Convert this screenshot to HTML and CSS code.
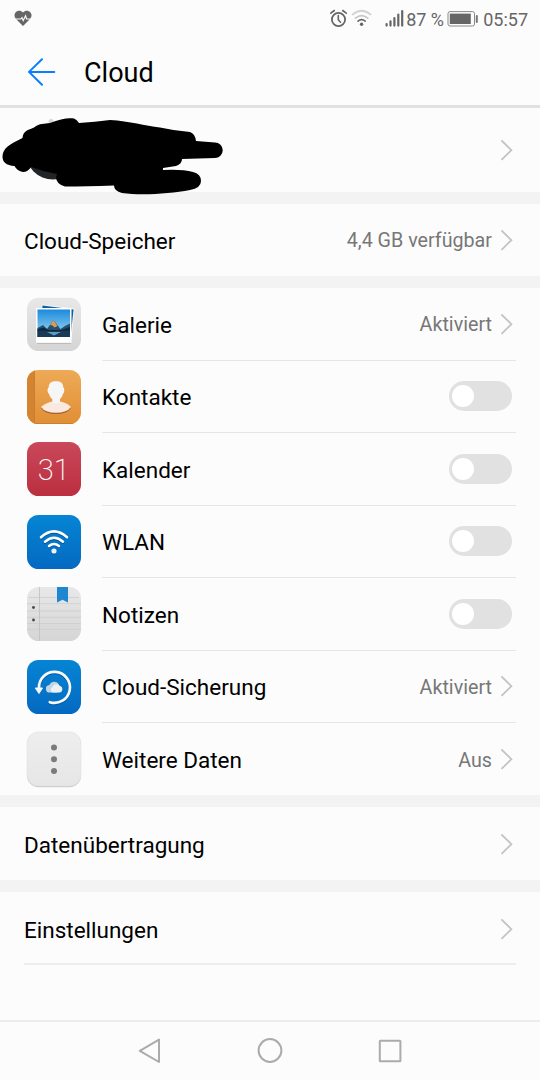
FILE: index.html
```html
<!DOCTYPE html>
<html lang="de">
<head>
  <meta charset="UTF-8" />
  <meta name="viewport" content="width=device-width, initial-scale=1.0" />
  <title>Cloud</title>
  <link rel="stylesheet" href="styles.css">
</head>
<body>
  <!-- shared shapes -->
  <svg class="defs" width="0" height="0">
    <defs>
      <symbol id="chevron" viewBox="0 0 14 22">
        <path d="M2 2 L11.4 11.2 L2 20.4" fill="none" stroke="#c4c4c4" stroke-width="1.8" stroke-linecap="round" stroke-linejoin="miter" />
      </symbol>
      <linearGradient id="grey" x1="0" y1="0" x2="0" y2="1"><stop offset="0" stop-color="#e8e8e8" /><stop offset="1" stop-color="#d5d5d5" /></linearGradient>
      <linearGradient id="light" x1="0" y1="0" x2="0" y2="1"><stop offset="0" stop-color="#eeeeee" /><stop offset="1" stop-color="#e6e6e6" /></linearGradient>
      <linearGradient id="orange" x1="0" y1="0" x2="0" y2="1"><stop offset="0" stop-color="#eeaa56" /><stop offset="1" stop-color="#e08f35" /></linearGradient>
      <linearGradient id="red" x1="0" y1="0" x2="0" y2="1"><stop offset="0" stop-color="#c9485a" /><stop offset="1" stop-color="#bb2f40" /></linearGradient>
      <linearGradient id="blue" x1="0" y1="0" x2="0" y2="1"><stop offset="0" stop-color="#0585d3" /><stop offset="1" stop-color="#0469c2" /></linearGradient>
      <linearGradient id="sky" x1="0" y1="0" x2="0" y2="1"><stop offset="0" stop-color="#1b8bdc" /><stop offset="1" stop-color="#a4daf5" /></linearGradient>
      <clipPath id="tile"><rect width="54" height="54" rx="11.5" /></clipPath>
    </defs>
  </svg>

  <div class="status-bar">
    <svg class="heart" width="18" height="17" viewBox="0 0 18 17">
      <path d="M9 16 L2 9 C0 6.8 0 4 1.7 2.2 C3.8 .1 7 .2 9 2.5 C11 .2 14.2 .1 16.3 2.2 C18 4 18 6.8 16 9 Z" fill="#666" />
      <path d="M1.5 9 H6.8 L8 7.6 L9.2 10.6 L11.6 5.8 L12.6 9 H16.5" fill="none" stroke="#fcfcfc" stroke-width="1.1" />
    </svg>
    <div class="status-right">
      <svg width="77" height="20" viewBox="0 0 77 20">
        <g fill="none" stroke="#666" stroke-width="1.8" stroke-linecap="round">
          <circle cx="9.5" cy="10.5" r="6.6" />
          <path d="M9.3 6.5 V10.8 L11.5 13.2 M1.8 4.2 L5.3 1.5 M13.7 1.5 L17.2 4.2" stroke-width="1.6" />
        </g>
        <g fill="none" stroke-width="1.7" stroke-linecap="round">
          <path d="M23.6 5.5 Q32.6 -2 41.6 5.5" stroke="#d0d5d1" />
          <path d="M26.4 9.1 Q32.6 4 38.8 9.1" stroke="#c3c8c4" />
          <path d="M29 12.1 Q32.6 9.3 36.2 12.1" stroke="#666" />
        </g>
        <circle cx="32.6" cy="15.2" r="1.7" fill="#666" />
        <path d="M57.6 16.6 V15 M61.5 16.6 V12.4 M65.4 16.6 V9 M69.3 16.6 V5.6 M73.2 16.6 V2" stroke="#666" stroke-width="2.2" stroke-linecap="round" />
      </svg>
      <span class="percent">87 %</span>
      <svg width="32" height="18" viewBox="0 0 32 18">
        <rect x="1" y="1.6" width="26.5" height="14.4" rx="2" fill="none" stroke="#888" stroke-width="1" />
        <rect x="2.8" y="3.6" width="21" height="10.4" fill="#666" />
        <rect x="28.8" y="5" width="2" height="8" rx="1" fill="#777" />
      </svg>
      <span class="time">05:57</span>
    </div>
  </div>

  <header>
    <svg width="30" height="30" viewBox="0 0 30 30">
      <path d="M27.3 14.9 H2 M15 2.2 L2 14.9 L15 27.8" fill="none" stroke="#087fff" stroke-width="2" stroke-linecap="round" stroke-linejoin="round" />
    </svg>
    <h1>Cloud</h1>
  </header>

  <section class="account">
    <svg class="scribble" width="240" height="90" viewBox="0 0 240 90">
      <circle cx="51" cy="11.5" r="2.5" fill="#d5d5d5" />
      <circle cx="53" cy="42" r="27.5" fill="#222527" />
      <path d="M2.5 46 C3 38 10 34 22.5 28 C23 21 28 20 34 17.5 C40 13 44 14 50 13 C60 9 68 7.5 74 8.5 Q77 9.5 79 13 Q95 12 110 10 C130 11 145 16 160 17.5 Q176 21 190 22 Q195 23.5 196 31 L215 32.5 A7.5 7.5 0 0 1 215 48 L182 49 Q182 54 176 56 L163 58 V60 Q182 59 193 62 Q201 64 201 71 Q201 78 190 80 C170 84 140 85.5 122 83 Q114 81 114 75.5 Q85 76.5 65 76.5 Q56 74 56 67 L57 64 Q44 62 31 57 Q28 62 23 62 Q17 61 14.5 56 Q2 55 2.5 46 Z" fill="#000" />
    </svg>
    <svg class="chevron"><use href="#chevron" /></svg>
  </section>

  <section class="item storage">
    <span class="label">Cloud-Speicher</span>
    <span class="value">4,4 GB verfügbar</span>
    <svg class="chevron"><use href="#chevron" /></svg>
  </section>

  <section class="apps">
    <div class="app">
      <svg class="icon" viewBox="0 0 54 54">
        <rect y=".7" width="54" height="53.3" rx="11.5" fill="url(#grey)" />
        <path d="M15 7.5 L47.5 11.5 L44.5 42 L12 38 Z" fill="#f8f8f8" />
        <path d="M15.5 8.5 L46.6 12.5 L44 36 L14 30 Z" fill="#11609e" />
        <rect x="10" y="45.5" width="34" height="1.5" fill="#bbb" />
        <rect x="9" y="11" width="35.5" height="34.8" fill="#fff" />
        <rect x="10.5" y="12.5" width="32.5" height="27.5" fill="url(#sky)" />
        <path d="M10.5 31 L16 28 L20 32 L26.5 23 L33.5 32 L38 29 L43 26.5 V40 H10.5 Z" fill="#28506e" />
        <path d="M23 28 L26.5 23 L30.5 29 L27.5 30.5 L25.5 28.5 Z" fill="#d99b56" />
        <path d="M10.5 32 L17 30.5 L22 33 H34 L43 30 V34 H10.5 Z" fill="#0c2c43" />
        <path d="M10.5 34 H43 V40 H10.5 Z" fill="#193a57" />
        <path d="M20 35 H34 L27 38.5 Z" fill="#5d9cc4" />
      </svg>
      <div class="app-row">
        <span class="label">Galerie</span>
        <span class="value">Aktiviert</span>
        <svg class="chevron"><use href="#chevron" /></svg>
      </div>
    </div>
    <div class="app">
      <svg class="icon" viewBox="0 0 54 54">
        <g clip-path="url(#tile)">
          <rect width="54" height="54" fill="url(#orange)" />
          <rect width="7.5" height="54" fill="#d48431" />
          <rect x="7.2" width=".8" height="54" fill="#c97928" />
          <path d="M0 54 V53 H54 V54 Z" fill="#c98034" />
        </g>
        <path d="M14 38 Q19 33.5 25.5 32.5 H33 Q40 33.5 44 38 Q40 44 29 44 Q18 44 14 38 Z" fill="#a45e32" />
        <path d="M14 37 Q19 32.5 25.5 31.5 H33 Q40 32.5 44 37 Q40 42.8 29 42.8 Q18 42.8 14 37 Z" fill="#fbe9df" />
        <path d="M29 11.3 C33.5 11.3 36.4 13.2 36.3 17.5 C37.8 18.5 37.6 23 35.8 24 C35.3 27 33.8 28 33 29 V32.3 Q29 34 25.3 32.3 V29 C24 28 22.8 27 22.2 24 C20.2 23 20 18.5 21.7 17.5 C21.5 13.2 24.5 11.3 29 11.3 Z" fill="#f6f6f6" />
      </svg>
      <div class="app-row">
        <span class="label">Kontakte</span>
        <span class="toggle"></span>
      </div>
    </div>
    <div class="app">
      <svg class="icon" viewBox="0 0 54 54">
        <rect width="54" height="54" rx="11.5" fill="url(#red)" />
        <text class="day" x="26.8" y="37.8" text-anchor="middle">31</text>
      </svg>
      <div class="app-row">
        <span class="label">Kalender</span>
        <span class="toggle"></span>
      </div>
    </div>
    <div class="app">
      <svg class="icon" viewBox="0 0 54 54">
        <rect width="54" height="54" rx="11.5" fill="url(#blue)" />
        <g fill="none" stroke="#075899" stroke-width="2.5" stroke-linecap="round" transform="translate(0 1)">
          <path d="M14 22.3 Q27 10.5 40 22.3 M18 26.7 Q27 18.7 36 26.7 M22 31 Q27 27 32 31" />
        </g>
        <g fill="none" stroke="#fff" stroke-width="2.5" stroke-linecap="round">
          <path d="M14 22.3 Q27 10.5 40 22.3 M18 26.7 Q27 18.7 36 26.7 M22 31 Q27 27 32 31" />
        </g>
        <circle cx="27" cy="37" r="2.6" fill="#075899" />
        <circle cx="27" cy="36" r="2.6" fill="#e8f3fb" />
      </svg>
      <div class="app-row">
        <span class="label">WLAN</span>
        <span class="toggle"></span>
      </div>
    </div>
    <div class="app">
      <svg class="icon" viewBox="0 0 54 54">
        <rect width="54" height="54" rx="11.5" fill="url(#grey)" />
        <path d="M2 10.5 H52 M0 16.7 H54 M0 24 H54 M0 30.3 H54 M0 36.5 H54 M0 42.3 H54" stroke="#cdcdcd" stroke-width=".8" />
        <path d="M12.5 0 V54" stroke="#c3c3c3" stroke-width=".9" />
        <circle cx="6.5" cy="20.5" r="1.4" fill="#444" />
        <circle cx="6.5" cy="33" r="1.4" fill="#444" />
        <path d="M30 0 H41 V15.5 L35.5 12.7 L30 15.5 Z" fill="#1d87cf" />
      </svg>
      <div class="app-row">
        <span class="label">Notizen</span>
        <span class="toggle"></span>
      </div>
    </div>
    <div class="app">
      <svg class="icon" viewBox="0 0 54 54">
        <rect width="54" height="54" rx="11.5" fill="url(#blue)" />
        <g fill="none" stroke-width="2.7" stroke-linecap="round">
          <path d="M12 28.5 A15.5 15.5 0 1 1 22.8 42.2" stroke="#07559c" transform="translate(0 1)" />
          <path d="M12 28.5 A15.5 15.5 0 1 1 22.8 42.2" stroke="#f5f9fc" />
        </g>
        <path d="M8.3 28 H15.5 L12 33.5 Z" fill="#f5f9fc" stroke="#f5f9fc" stroke-linejoin="round" />
        <path d="M23 32.5 A3.7 3.7 0 0 1 22.3 25.1 A5.3 5.3 0 0 1 31.5 23.8 Q32.5 26 30.5 32.5 Z" fill="#bfd5e3" />
        <path d="M25.5 32.5 A3.2 3.2 0 0 1 25.5 26.8 A4.4 4.4 0 0 1 33.2 26.1 A3.3 3.3 0 0 1 32.5 32.5 Z" fill="#ecf1f3" />
      </svg>
      <div class="app-row">
        <span class="label">Cloud-Sicherung</span>
        <span class="value">Aktiviert</span>
        <svg class="chevron"><use href="#chevron" /></svg>
      </div>
    </div>
    <div class="app">
      <svg class="icon" viewBox="0 0 54 54">
        <rect y="1.2" width="54" height="54" rx="11.5" fill="#c9c9c9" />
        <rect width="54" height="54" rx="11.5" fill="url(#light)" stroke="#e0e0e0" stroke-width=".6" />
        <g fill="#7b7b7b"><circle cx="27" cy="15.5" r="3" /><circle cx="27" cy="27.2" r="3" /><circle cx="27" cy="39" r="3" /></g>
      </svg>
      <div class="app-row">
        <span class="label">Weitere Daten</span>
        <span class="value">Aus</span>
        <svg class="chevron"><use href="#chevron" /></svg>
      </div>
    </div>
  </section>

  <section class="item transfer">
    <span class="label">Datenübertragung</span>
    <svg class="chevron"><use href="#chevron" /></svg>
  </section>

  <section class="item last">
    <span class="label">Einstellungen</span>
    <svg class="chevron"><use href="#chevron" /></svg>
  </section>

  <nav>
    <svg width="26" height="28" viewBox="0 0 26 28"><path d="M22 2.6 V25 L2.8 13.8 Z" /></svg>
    <svg width="26" height="28" viewBox="0 0 26 28"><circle cx="13" cy="13.5" r="11.4" /></svg>
    <svg width="26" height="28" viewBox="0 0 26 28"><rect x="2.8" y="3.7" width="20.6" height="20.6" rx=".5" /></svg>
  </nav>
</body>
</html>
```

FILE: styles.css
```css
* { box-sizing: border-box; margin: 0; padding: 0; }
body {
  display: flex;
  flex-direction: column;
  height: 1080px;
  font-family: Roboto, sans-serif;
  background-color: #fcfcfc;
  color: #000;
  overflow: hidden;
}
svg { display: block; flex-shrink: 0; }
.defs { position: absolute; }
.status-bar {
  display: flex;
  justify-content: space-between;
  align-items: center;
  height: 38px;
  padding: 0 12px 0 14px;
  color: #666;
  font-size: 18px;
}
.heart { margin-bottom: 2px; }
.status-right { display: flex; align-items: center; }
.percent { width: 41px; white-space: nowrap; }
.time { margin-left: 4px; }
header {
  display: flex;
  align-items: center;
  gap: 27px;
  height: 70px;
  padding: 0 27px;
  border-bottom: 3px solid #e1e1e1;
}
header h1 { font-size: 27px; font-weight: 400; padding-top: 3px; }
.account {
  position: relative;
  display: flex;
  align-items: center;
  justify-content: flex-end;
  height: 84px;
  padding-right: 26px;
}
.scribble {
  position: absolute;
  left: 0;
  top: 2px;
}
.item {
  display: flex;
  align-items: center;
  height: 84px;
  padding: 0 26px 0 24px;
  border-top: 12px solid #f3f3f3;
}
.transfer { height: 85px; }
.label { font-size: 22.5px; margin-right: auto; padding-top: 2px; }
.value { font-size: 19.7px; color: #777; margin-right: 8px; padding-top: 2px; }
.storage .label, .storage .value { padding-top: 1px; }
.chevron { width: 14px; height: 22px; }
.apps { border-top: 12px solid #f3f3f3; }
.app {
  display: flex;
  align-items: center;
  height: 72.5px;
  padding: 0 24px 0 27px;
}
.app:last-child { height: 72px; }
.icon { width: 54px; height: 54px; margin-right: 21px; overflow: visible; }
.app-row {
  flex: 1;
  display: flex;
  align-items: center;
  height: 100%;
  padding-right: 2px;
  border-bottom: 1px solid #e6e6e6;
}
.app:last-child .app-row { border-bottom: none; }
.day { font-size: 29px; font-weight: 200; fill: #fff; }
.toggle {
  width: 63px;
  height: 30px;
  margin-right: 2.5px;
  padding: 4px 3px;
  border-radius: 15px;
  background-color: #e1e1e1;
}
.toggle::before {
  content: "";
  display: block;
  width: 22px;
  height: 22px;
  border-radius: 50%;
  background-color: #fff;
}
.last {
  position: relative;
  height: 85px;
}
.last::after {
  content: "";
  position: absolute;
  left: 24px;
  right: 24px;
  bottom: 0;
  height: 2px;
  background-color: #ededed;
}
nav {
  display: flex;
  align-items: center;
  justify-content: center;
  gap: 94px;
  height: 60px;
  margin-top: auto;
  border-top: 2px solid #ececec;
}
nav svg {
  margin-bottom: 1px;
  fill: none;
  stroke: #ababab;
  stroke-width: 2;
  stroke-linejoin: round;
}
```
